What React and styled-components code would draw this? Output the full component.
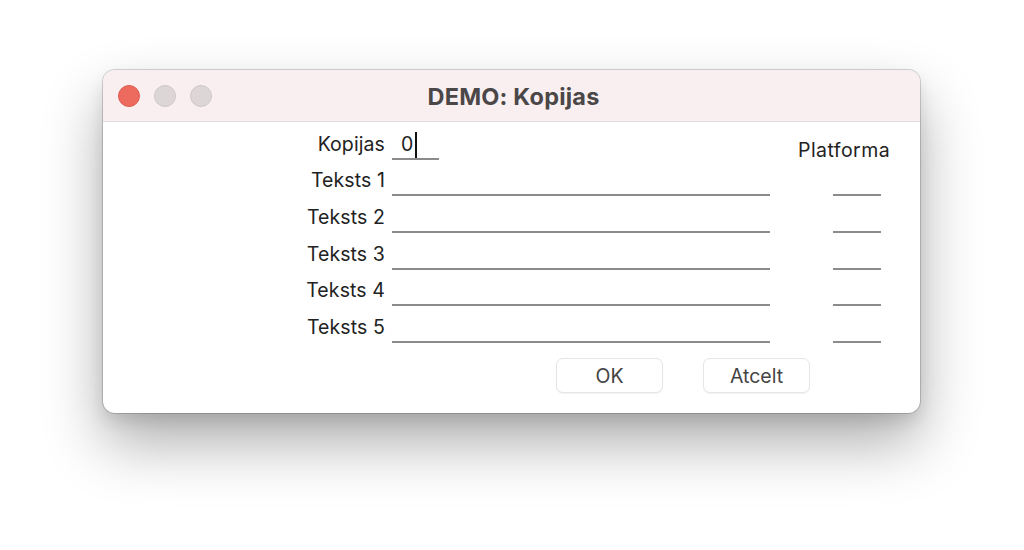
import React from "react";
import styled, { createGlobalStyle } from "styled-components";

const Global = createGlobalStyle`
  html, body { margin: 0; padding: 0; background: #ffffff; }
  body { font-family: Inter, "Noto Sans", "Liberation Sans", sans-serif; -webkit-font-smoothing: antialiased; }
`;

const Page = styled.div`
  width: 1024px;
  height: 550px;
  overflow: hidden;
  padding: 70px 0 0 103px;
  box-sizing: border-box;
  background: #fff;
`;

const Window = styled.div`
  width: 817px;
  height: 343px;
  border-radius: 12px;
  background: #ffffff;
  overflow: hidden;
  box-shadow: 0 0 0 1px rgba(0, 0, 0, 0.16), 0 30px 60px rgba(0, 0, 0, 0.32),
    0 8px 16px rgba(0, 0, 0, 0.1);
  display: flex;
  flex-direction: column;
`;

const TitleBar = styled.div`
  height: 51px;
  flex: none;
  background: #f9eff0;
  border-bottom: 1px solid #e2dcdc;
  display: flex;
  align-items: center;
  position: relative;
  padding-left: 15px;
  gap: 14px;
`;

const Light = styled.span`
  width: 22px;
  height: 22px;
  border-radius: 50%;
  box-sizing: border-box;
  background: ${(p) => (p.$close ? "#ec6a5e" : "#ddd6d7")};
  border: 1px solid ${(p) => (p.$close ? "#de5a4f" : "#cfc7c8")};
  margin-top: 1px;
`;

const Title = styled.div`
  position: absolute;
  left: 0;
  right: 0;
  top: 0;
  bottom: 0;
  display: flex;
  align-items: center;
  justify-content: center;
  font-size: 23.5px;
  font-weight: 700;
  color: #4b4748;
  pointer-events: none;
  padding-left: 4px;
  padding-top: 1px;
  letter-spacing: 0.2px;
`;

const Form = styled.div`
  display: grid;
  grid-template-columns: 282px 378px 120px;
  grid-auto-rows: 36.7px;
  column-gap: 7px;
`;

const Label = styled.div`
  font-size: 19.5px;
  color: #222;
  text-align: right;
  align-self: end;
  padding-bottom: 4px;
  line-height: 22px;
  letter-spacing: 0.1px;
`;

const Field = styled.div`
  align-self: end;
  height: 30px;
  border-bottom: 2px solid #8b8b8b;
  width: ${(p) => p.$w || "100%"};
  margin-left: ${(p) => p.$ml || "0"};
  margin-bottom: -1px;
  box-sizing: border-box;
  display: flex;
  align-items: flex-end;
  font-size: 19.5px;
  color: #222;
  padding-left: 9px;
  padding-bottom: 3px;
  line-height: 22px;
`;

const Caret = styled.span`
  display: inline-block;
  width: 1.5px;
  height: 26px;
  background: #111;
  margin-left: 2px;
  margin-bottom: -3px;
`;

const Header = styled.div`
  align-self: end;
  margin-left: 21px;
  font-size: 19.5px;
  color: #222;
  line-height: 22px;
  margin-bottom: -2px;
  letter-spacing: 0.45px;
`;

const Buttons = styled.div`
  display: flex;
  gap: 40px;
  padding: 16px 0 0 453px;
`;

const Button = styled.button`
  width: 107px;
  height: 35px;
  border-radius: 7px;
  border: 1px solid #e6e6e6;
  background: #fff;
  font-family: inherit;
  font-size: 19.5px;
  color: #444;
  padding: 0;
  box-shadow: 0 0.5px 1px rgba(0, 0, 0, 0.05);
`;

const rows = ["Teksts 1", "Teksts 2", "Teksts 3", "Teksts 4", "Teksts 5"];

export default function App() {
  return (
    <Page>
      <Global />
      <Window>
        <TitleBar>
          <Light $close />
          <Light />
          <Light />
          <Title>DEMO: Kopijas</Title>
        </TitleBar>
        <Form>
          <Label>Kopijas</Label>
          <Field $w="47px">
            0<Caret />
          </Field>
          <Header>Platforma</Header>
          {rows.map((r) => (
            <React.Fragment key={r}>
              <Label>{r}</Label>
              <Field />
              <Field $w="48px" $ml="56px" />
            </React.Fragment>
          ))}
        </Form>
        <Buttons>
          <Button>OK</Button>
          <Button>Atcelt</Button>
        </Buttons>
      </Window>
    </Page>
  );
}
